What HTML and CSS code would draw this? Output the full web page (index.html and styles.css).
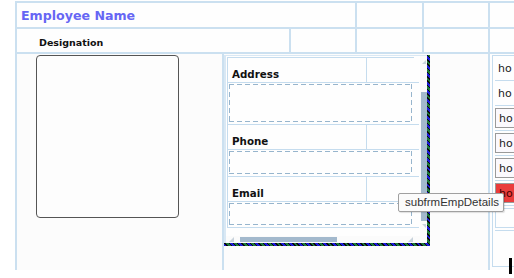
FILE: index.html
```html
<!DOCTYPE html>
<html>
<head>
<meta charset="utf-8">
<link rel="stylesheet" href="styles.css">
</head>
<body>
<div class="sheet">
  <div class="cell span-ac"><span class="title">Employee Name</span></div>
  <div class="cell"></div>
  <div class="cell"></div>
  <div class="cell"></div>
  <div class="cell span-ab"><span class="caption">Designation</span></div>
  <div class="cell"></div>
  <div class="cell"></div>
  <div class="cell"></div>
  <div class="cell"></div>
  <div class="cell photo-cell"><div class="photo"></div></div>
  <div class="cell span-be sub-cell">
    <div class="frame">
      <div class="subform">
        <div class="sub-content">
          <div class="detail">
            <div class="lrow"><span class="lcell">Address</span></div>
            <div class="brow tall"><div class="dbox"></div></div>
            <div class="lrow"><span class="lcell">Phone</span></div>
            <div class="brow"><div class="dbox"></div></div>
            <div class="lrow"><span class="lcell">Email</span></div>
            <div class="brow last"><div class="dbox"></div></div>
          </div>
        </div>
        <div class="vscroll"><span class="arr up"></span><span class="vthumb"></span><span class="arr dn"></span></div>
        <div class="hscroll"><span class="arr lf"></span><span class="hthumb"></span><span class="arr rt"></span></div>
        <div class="corner"></div>
      </div>
    </div>
  </div>
  <div class="cell side">
    <div class="side-box">
      <div class="srow">ho</div>
      <div class="srow">ho</div>
      <div class="srow"><span class="inp">ho</span></div>
      <div class="srow"><span class="inp">ho</span></div>
      <div class="srow"><span class="inp">ho</span></div>
      <div class="srow"><span class="inp red">ho</span></div>
      <div class="srow"><span class="inp blank"></span></div>
    </div>
  </div>
</div>
<div class="tooltip">subfrmEmpDetails</div>
<div class="cursor"></div>
</body>
</html>
```
FILE: styles.css
```css
html, body {
  margin: 0;
  padding: 0;
  background: #ffffff;
  overflow: hidden;
  width: 514px;
  height: 278px;
  font-family: "DejaVu Sans", Verdana, sans-serif;
}
.sheet {
  margin: 1px 0 0 15px;
  display: grid;
  grid-template-columns: 205px 65px 64px 65px 64px 40px;
  grid-template-rows: 24px 23px 216px;
  gap: 2px;
  background: #cbe0f0;
  border-left: 2px solid #cbe0f0;
  border-top: 2px solid #cbe0f0;
  width: 520px;
}
.cell {
  background: #fefefe;
  min-width: 0;
  position: relative;
}
.span-ac { grid-column: 1 / 4; display: flex; align-items: center; }
.span-ab { grid-column: 1 / 3; display: flex; align-items: center; }
.span-be { grid-column: 2 / 6; }
.title {
  color: #6666f4;
  font-weight: bold;
  font-size: 12.6px;
  padding-left: 4px;
}
.caption {
  font-weight: bold;
  font-size: 9.5px;
  padding-left: 22px;
  color: #111;
  padding-top: 4px;
}
.photo-cell { background: #fcfcfc; padding: 1px 0 0 19px; }
.photo {
  width: 141px;
  height: 161px;
  border: 1px solid #555;
  border-radius: 4px;
  background: #fdfdfd;
}
.sub-cell { background: #fcfcfc; padding-top: 1px; }
.frame {
  width: 203px;
  padding: 0 3px 3px 0;
  background: repeating-linear-gradient(45deg, #1b1bd8 0 2px, #0a0a0a 2px 3px, #1d7a3c 3px 5px, #0a0a0a 5px 6px);
}
.subform {
  height: 187px;
  border-left: 2px solid #d9e8f4;
  border-top: 1px solid #d9e8f4;
  background: #fefefe;
  display: grid;
  grid-template-columns: 194px 7px;
  grid-template-rows: 180px 7px;
}
.sub-content { padding: 1px 0 0 1px; overflow: hidden; }
.detail {
  width: 186px;
  border-left: 1px solid #c5dcee;
  border-top: 1px solid #c5dcee;
}
.lrow {
  height: 24px;
  border-bottom: 1px solid #c5dcee;
  display: flex;
  width: 191px;
}
.lcell {
  width: 139px;
  border-right: 1px solid #c5dcee;
  font-weight: bold;
  font-size: 10.3px;
  color: #111;
  padding: 10px 0 0 4px;
  box-sizing: border-box;
}
.brow {
  border-bottom: 1px solid #c5dcee;
  padding: 1px 0 0 1px;
  box-sizing: border-box;
  height: 27px;
  width: 191px;
}
.brow.tall { height: 42px; }
.brow.last { height: 26px; }
.dbox {
  width: 183px;
  height: calc(100% - 2px);
  box-sizing: border-box;
  background:
    linear-gradient(90deg, #97b5cd 5px, transparent 5px) left top / 8px 1px repeat-x,
    linear-gradient(90deg, #97b5cd 5px, transparent 5px) left bottom / 8px 1px repeat-x,
    linear-gradient(180deg, #97b5cd 5px, transparent 5px) left top / 1px 8px repeat-y,
    linear-gradient(180deg, #97b5cd 5px, transparent 5px) right top / 1px 8px repeat-y,
    #fefefe;
}
.vscroll {
  display: flex;
  flex-direction: column;
  align-items: center;
  background: #fbfbfb;
  padding: 4px 0 0 1px;
}
.vthumb {
  display: block;
  flex: none;
  width: 6px;
  height: 129px;
  background: #a3b9cd;
  margin-top: 28px;
}
.arr { width: 0; height: 0; display: block; flex: none; }
.arr.up { border-left: 4px solid transparent; border-bottom: 4px solid #c9d3dc; }
.arr.dn { border-left: 4px solid transparent; border-top: 4px solid #c9d3dc; margin-top: 3px; }
.hscroll {
  display: flex;
  align-items: flex-end;
  padding: 0 0 1px 3px;
  background: #fbfbfb;
  height: 7px;
  box-sizing: border-box;
}
.arr.lf { border-left: 5px solid transparent; border-bottom: 5px solid #c9d3dc; }
.hthumb {
  display: block;
  flex: none;
  width: 97px;
  height: 5px;
  background: #a3b9cd;
  margin-left: 6px;
}
.arr.rt { border-left: 5px solid transparent; border-bottom: 5px solid #c9d3dc; margin-left: 71px; }
.corner { background: #fbfbfb; }
.side { padding: 1px 0 0 2px; }
.side-box {
  border-left: 1px solid #c5dcee;
  border-top: 1px solid #c5dcee;
  border-bottom: 1px solid #c5dcee;
  height: 210px;
  padding-left: 2px;
}
.srow {
  height: 24px;
  border-bottom: 1px solid #c5dcee;
  font-size: 11px;
  font-family: "DejaVu Sans", sans-serif;
  display: flex;
  align-items: center;
  color: #222;
  padding-left: 3px;
}
.inp {
  display: block;
  width: 30px;
  height: 20px;
  line-height: 20px;
  border: 1px solid #9a9a9a;
  border-right: 0;
  background: #fbf9fd;
  padding-left: 3px;
  margin-left: -3px;
  box-sizing: border-box;
}
.inp.red { background: #ea3c3c; color: #400; }
.inp.blank { background: #fefefe; border-color: #c5dcee; }
.tooltip {
  position: absolute;
  left: 398px;
  top: 193px;
  width: 106px;
  height: 19px;
  box-sizing: border-box;
  border: 1px solid #a0a0a0;
  border-radius: 2px;
  background: #fbfbfb;
  box-shadow: 1px 1px 1px rgba(0,0,0,0.12);
  font-family: "Liberation Sans", Arial, sans-serif;
  font-size: 11.5px;
  color: #333;
  padding: 2px 0 0 6px;
}
.cursor {
  position: absolute;
  left: 509px;
  top: 258px;
  width: 3px;
  height: 16px;
  background: #000;
}
```
